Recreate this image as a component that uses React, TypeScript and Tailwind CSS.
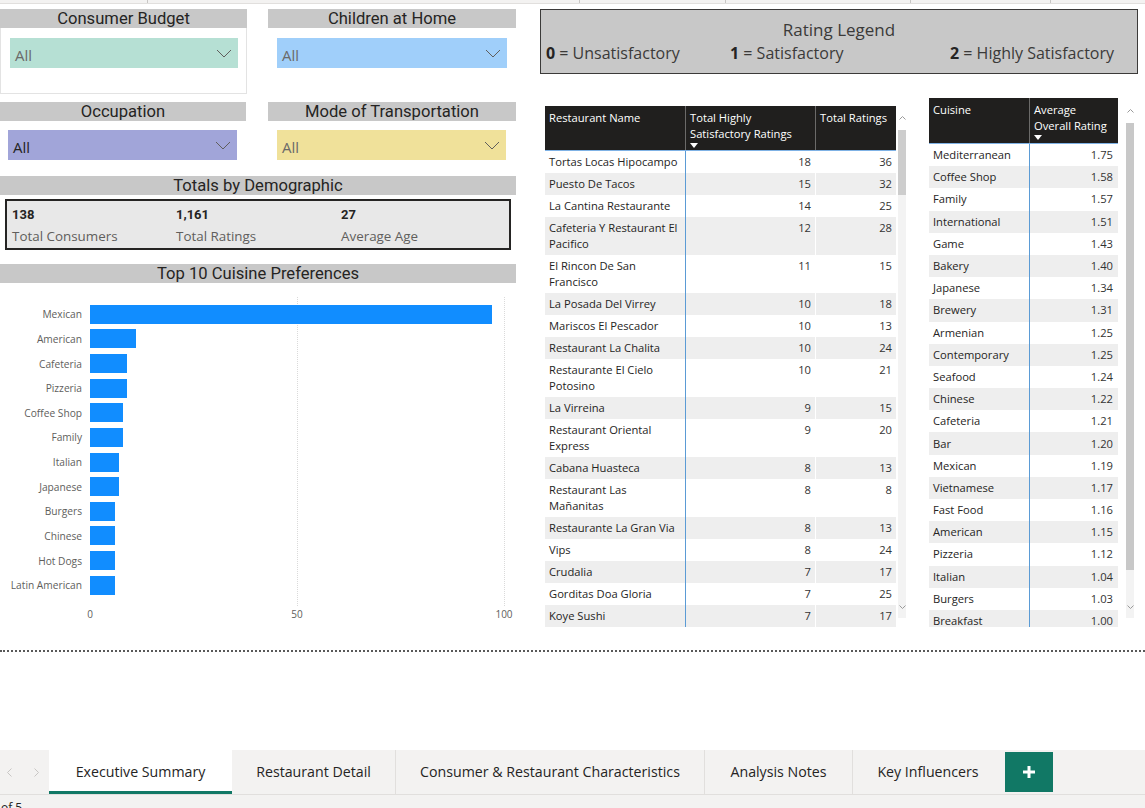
import React from "react";

const restaurants: { name: string[]; hs: number; total: number }[] = [
  { name: ["Tortas Locas Hipocampo"], hs: 18, total: 36 },
  { name: ["Puesto De Tacos"], hs: 15, total: 32 },
  { name: ["La Cantina Restaurante"], hs: 14, total: 25 },
  { name: ["Cafeteria Y Restaurant El", "Pacifico"], hs: 12, total: 28 },
  { name: ["El Rincon De San", "Francisco"], hs: 11, total: 15 },
  { name: ["La Posada Del Virrey"], hs: 10, total: 18 },
  { name: ["Mariscos El Pescador"], hs: 10, total: 13 },
  { name: ["Restaurant La Chalita"], hs: 10, total: 24 },
  { name: ["Restaurante El Cielo", "Potosino"], hs: 10, total: 21 },
  { name: ["La Virreina"], hs: 9, total: 15 },
  { name: ["Restaurant Oriental", "Express"], hs: 9, total: 20 },
  { name: ["Cabana Huasteca"], hs: 8, total: 13 },
  { name: ["Restaurant Las", "Mañanitas"], hs: 8, total: 8 },
  { name: ["Restaurante La Gran Via"], hs: 8, total: 13 },
  { name: ["Vips"], hs: 8, total: 24 },
  { name: ["Crudalia"], hs: 7, total: 17 },
  { name: ["Gorditas Doa Gloria"], hs: 7, total: 25 },
  { name: ["Koye Sushi"], hs: 7, total: 17 },
];

const cuisines: [string, string][] = [
  ["Mediterranean", "1.75"],
  ["Coffee Shop", "1.58"],
  ["Family", "1.57"],
  ["International", "1.51"],
  ["Game", "1.43"],
  ["Bakery", "1.40"],
  ["Japanese", "1.34"],
  ["Brewery", "1.31"],
  ["Armenian", "1.25"],
  ["Contemporary", "1.25"],
  ["Seafood", "1.24"],
  ["Chinese", "1.22"],
  ["Cafeteria", "1.21"],
  ["Bar", "1.20"],
  ["Mexican", "1.19"],
  ["Vietnamese", "1.17"],
  ["Fast Food", "1.16"],
  ["American", "1.15"],
  ["Pizzeria", "1.12"],
  ["Italian", "1.04"],
  ["Burgers", "1.03"],
  ["Breakfast", "1.00"],
];

const prefs: [string, number][] = [
  ["Mexican", 97],
  ["American", 11],
  ["Cafeteria", 9],
  ["Pizzeria", 9],
  ["Coffee Shop", 8],
  ["Family", 8],
  ["Italian", 7],
  ["Japanese", 7],
  ["Burgers", 6],
  ["Chinese", 6],
  ["Hot Dogs", 6],
  ["Latin American", 6],
];

function Header({ title, className }: { title: string; className: string }) {
  return (
    <div
      className={
        "h-[19px] bg-[#c8c8c8] flex items-center justify-center text-[16.6px] leading-[19px] text-[#252423] font-['Roboto',sans-serif] " +
        className
      }
    >
      {title}
    </div>
  );
}

function Chevron() {
  return (
    <svg width="16" height="9" viewBox="0 0 16 9" className="shrink-0">
      <path d="M1 1 L8 8 L15 1" stroke="#605e5c" strokeWidth="1" fill="none" />
    </svg>
  );
}

function Dropdown({ className, textClass }: { className: string; textClass: string }) {
  return (
    <div className={"h-[30px] flex items-center justify-between pl-[5px] pr-[6px] " + className}>
      <span className={"text-[15px] leading-[20px] pt-[3px] " + textClass}>All</span>
      <Chevron />
    </div>
  );
}

function SortArrow() {
  return (
    <svg width="8" height="5" viewBox="0 0 8 5" className="block mt-[1px]">
      <path d="M0 0 H8 L4 5 Z" fill="#ffffff" />
    </svg>
  );
}

function ScrollUp() {
  return (
    <svg width="7" height="4" viewBox="0 0 7 4">
      <path d="M0.5 3.5 L3.5 0.5 L6.5 3.5" stroke="#9a9a9a" strokeWidth="1" fill="none" />
    </svg>
  );
}

function ScrollDown() {
  return (
    <svg width="7" height="4" viewBox="0 0 7 4">
      <path d="M0.5 0.5 L3.5 3.5 L6.5 0.5" stroke="#9a9a9a" strokeWidth="1" fill="none" />
    </svg>
  );
}

export default function App() {
  return (
    <div className="w-[1145px] h-[808px] overflow-hidden bg-white flex flex-col font-['Open_Sans','Noto_Sans',sans-serif] text-[#252423]">
      {/* top strip */}
      <div className="h-[4px] shrink-0 bg-[#f3f2f1] border-b border-[#e1dfdd] flex">
        <div className="w-[148px] border-r border-[#c8c6c4]" />
        <div className="w-[432px] border-r border-[#c8c6c4]" />
        <div className="w-[146px] border-r border-[#c8c6c4]" />
        <div className="w-[185px] border-r border-[#c8c6c4]" />
        <div className="w-[140px] border-r border-[#c8c6c4]" />
      </div>

      {/* main canvas */}
      <div className="h-[646px] shrink-0 flex">
        {/* left column */}
        <div className="w-[516px] shrink-0 flex flex-col pt-[5px]">
          <div className="flex gap-[21px]">
            <div className="w-[247px]">
              <Header title="Consumer Budget" className="" />
              <div className="h-[66px] border-x border-b border-[#e3e3e3] pt-[10px] pl-[9px]">
                <Dropdown className="w-[228px] bg-[#b6e0d4]" textClass="text-[#6b6a69]" />
              </div>
            </div>
            <div className="w-[248px]">
              <Header title="Children at Home" className="" />
              <div className="h-[66px] pt-[10px] pl-[9px]">
                <Dropdown className="w-[230px] bg-[#a0cffa]" textClass="text-[#6b6a69]" />
              </div>
            </div>
          </div>

          <div className="flex gap-[22px] mt-[8px]">
            <div className="w-[246px]">
              <Header title="Occupation" className="" />
              <div className="pt-[9px] pl-[8px]">
                <Dropdown className="w-[229px] bg-[#a1a5d9]" textClass="text-[#252423]" />
              </div>
            </div>
            <div className="w-[248px]">
              <Header title="Mode of Transportation" className="" />
              <div className="pt-[9px] pl-[9px]">
                <Dropdown className="w-[229px] bg-[#f0e19a]" textClass="text-[#6b6a69]" />
              </div>
            </div>
          </div>

          <Header title="Totals by Demographic" className="mt-[16px] w-[516px]" />
          <div className="mt-[4px] ml-[5px] w-[506px] h-[51px] border-2 border-[#252423] bg-[#e8e8e8] flex pl-[5px] pt-[5px]">
            <div className="w-[164px]">
              <div className="text-[13px] leading-[18px] font-bold font-['Roboto',sans-serif] text-[#252423]">138</div>
              <div className="mt-[3px] text-[13.4px] leading-[18px] text-[#605e5c]">Total Consumers</div>
            </div>
            <div className="w-[165px]">
              <div className="text-[13px] leading-[18px] font-bold font-['Roboto',sans-serif] text-[#252423]">1,161</div>
              <div className="mt-[3px] text-[13.4px] leading-[18px] text-[#605e5c]">Total Ratings</div>
            </div>
            <div className="flex-1">
              <div className="text-[13px] leading-[18px] font-bold font-['Roboto',sans-serif] text-[#252423]">27</div>
              <div className="mt-[3px] text-[13.4px] leading-[18px] text-[#605e5c]">Average Age</div>
            </div>
          </div>

          <Header title="Top 10 Cuisine Preferences" className="mt-[14px] w-[516px]" />

          {/* chart */}
          <div className="relative flex-1">
            <div className="absolute left-[297px] top-[14px] h-[309px] border-l border-dotted border-[#dadada]" />
            <div className="absolute left-[504px] top-[14px] h-[309px] border-l border-dotted border-[#dadada]" />
            <div className="relative flex flex-col pt-[19px]">
              {prefs.map(([label, v]) => (
                <div key={label} className="flex items-center h-[24.64px]">
                  <div className="w-[82px] shrink-0 text-right text-[10.2px] leading-[14px] text-[#605e5c] whitespace-nowrap">
                    {label}
                  </div>
                  <div className="ml-[8px] h-[19px] bg-[#118dff]" style={{ width: v * 4.14 }} />
                </div>
              ))}
              <div className="relative h-[14px] mt-[9px] text-[10px] leading-[14px] text-[#605e5c]">
                <span className="absolute left-[90px] -translate-x-1/2">0</span>
                <span className="absolute left-[297px] -translate-x-1/2">50</span>
                <span className="absolute left-[504px] -translate-x-1/2">100</span>
              </div>
            </div>
          </div>
        </div>

        {/* right area */}
        <div className="ml-[24px] flex flex-col pt-[5px]">
          {/* legend */}
          <div className="w-[598px] h-[65px] border border-[#3b3a39] bg-[#c8c8c8] pt-[9px] flex flex-col">
            <div className="text-center text-[17px] leading-[22px] text-[#3b3a39]">Rating Legend</div>
            <div className="flex pl-[5px] mt-[1px] text-[16px] leading-[22px] text-[#3b3a39] whitespace-nowrap">
              <div className="w-[184px]">
                <span className="font-bold text-[#252423]">0</span> = Unsatisfactory
              </div>
              <div className="w-[220px]">
                <span className="font-bold text-[#252423]">1</span> = Satisfactory
              </div>
              <div>
                <span className="font-bold text-[#252423]">2</span> = Highly Satisfactory
              </div>
            </div>
          </div>

          <div className="flex items-start">
            {/* restaurant table */}
            <div className="mt-[32px] ml-[5px] flex items-start">
              <div className="w-[351px] h-[521px] overflow-hidden flex flex-col">
                <div className="h-[45px] shrink-0 flex bg-[#201f1e] text-white text-[11.2px] leading-[16px] border-b border-[#7fb2e5]">
                  <div className="w-[141px] pl-[4px] pt-[4px] border-r border-[#6b6a69]">Restaurant Name</div>
                  <div className="w-[130px] pl-[4px] pt-[4px] border-r border-[#6b6a69]">
                    Total Highly
                    <br />
                    Satisfactory Ratings
                    <SortArrow />
                  </div>
                  <div className="flex-1 pl-[4px] pt-[4px] whitespace-nowrap">Total Ratings</div>
                </div>
                {restaurants.map((r, i) => (
                  <div
                    key={r.name.join(" ")}
                    className={
                      "flex shrink-0 text-[11.2px] leading-[16px] " + (i % 2 === 1 ? "bg-[#eeeeee]" : "bg-white")
                    }
                  >
                    <div className="w-[141px] shrink-0 pl-[4px] py-[3px] border-r border-[#5b9bd5] whitespace-nowrap text-[#252423]">
                      {r.name.map((l, j) => (
                        <div key={j}>{l}</div>
                      ))}
                    </div>
                    <div className="w-[130px] shrink-0 pr-[4px] py-[3px] text-right border-r border-white text-[#333333]">{r.hs}</div>
                    <div className="flex-1 pr-[4px] py-[3px] text-right text-[#333333]">{r.total}</div>
                  </div>
                ))}
              </div>
              <div className="ml-[2px] w-[8px] h-[512px] flex flex-col">
                <div className="h-[24px] flex items-center justify-center">
                  <ScrollUp />
                </div>
                <div className="h-[65px] bg-[#cdcdcd]" />
                <div className="flex-1 bg-[#f3f3f3] flex flex-col justify-end items-center pb-[9px]">
                  <ScrollDown />
                </div>
              </div>
            </div>

            {/* cuisine table */}
            <div className="mt-[24px] ml-[23px] flex items-start">
              <div className="w-[189px] h-[529px] overflow-hidden flex flex-col">
                <div className="h-[46px] shrink-0 flex bg-[#201f1e] text-white text-[11.2px] leading-[16px] border-b border-[#7fb2e5]">
                  <div className="w-[101px] pl-[4px] pt-[4px] border-r border-[#6b6a69]">Cuisine</div>
                  <div className="flex-1 pl-[4px] pt-[4px] whitespace-nowrap">
                    Average
                    <br />
                    Overall Rating
                    <SortArrow />
                  </div>
                </div>
                {cuisines.map(([c, v], i) => (
                  <div
                    key={c}
                    className={
                      "h-[22.2px] shrink-0 flex items-stretch text-[11.2px] leading-[16px] " +
                      (i % 2 === 1 ? "bg-[#eeeeee]" : "bg-white")
                    }
                  >
                    <div className="w-[101px] shrink-0 pl-[4px] flex items-center border-r border-[#5b9bd5] text-[#252423]">{c}</div>
                    <div className="flex-1 pr-[5px] flex items-center justify-end text-[#333333]">{v}</div>
                  </div>
                ))}
              </div>
              <div className="ml-[8px] w-[8px] h-[520px] flex flex-col">
                <div className="h-[25px] flex items-center justify-center">
                  <ScrollUp />
                </div>
                <div className="h-[447px] bg-[#c8c8c8]" />
                <div className="flex-1 bg-[#f3f3f3] flex flex-col justify-end items-center pb-[9px]">
                  <ScrollDown />
                </div>
              </div>
            </div>
          </div>
        </div>
      </div>

      {/* dotted separator */}
      <div className="h-[2px] shrink-0 border-t-2 border-dotted border-[#595959]" />

      <div className="h-[98px] shrink-0 bg-white" />

      {/* tab bar */}
      <div className="h-[44px] shrink-0 bg-[#f3f2f1] flex items-stretch text-[14.2px] text-[#252423]">
        <div className="w-[49px] flex items-center pl-[7px] gap-[22px]">
          <svg width="5" height="9" viewBox="0 0 5 9">
            <path d="M4.5 0.5 L0.5 4.5 L4.5 8.5" stroke="#c8c6c4" strokeWidth="1" fill="none" />
          </svg>
          <svg width="5" height="9" viewBox="0 0 5 9">
            <path d="M0.5 0.5 L4.5 4.5 L0.5 8.5" stroke="#c8c6c4" strokeWidth="1" fill="none" />
          </svg>
        </div>
        <div className="w-[183px] bg-white border-b-[3px] border-[#117865] flex items-center justify-center pt-[3px]">
          Executive Summary
        </div>
        <div className="w-[164px] border-r border-[#e1dfdd] flex items-center justify-center">Restaurant Detail</div>
        <div className="w-[309px] border-r border-[#e1dfdd] flex items-center justify-center whitespace-nowrap">
          Consumer &amp; Restaurant Characteristics
        </div>
        <div className="w-[148px] border-r border-[#e1dfdd] flex items-center justify-center">Analysis Notes</div>
        <div className="w-[150px] flex items-center justify-center">Key Influencers</div>
        <div className="ml-[2px] mt-[2px] w-[48px] h-[40px] bg-[#117865] flex items-center justify-center">
          <svg width="14" height="14" viewBox="0 0 14 14">
            <path d="M7 1 V13 M1 7 H13" stroke="#ffffff" strokeWidth="3" fill="none" />
          </svg>
        </div>
      </div>

      {/* footer */}
      <div className="h-[14px] shrink-0 bg-[#f3f2f1] border-t border-[#e1dfdd] overflow-hidden pt-[6px] pl-[1px] text-[12px] leading-[14px] text-[#252423]">
        of 5
      </div>
    </div>
  );
}
